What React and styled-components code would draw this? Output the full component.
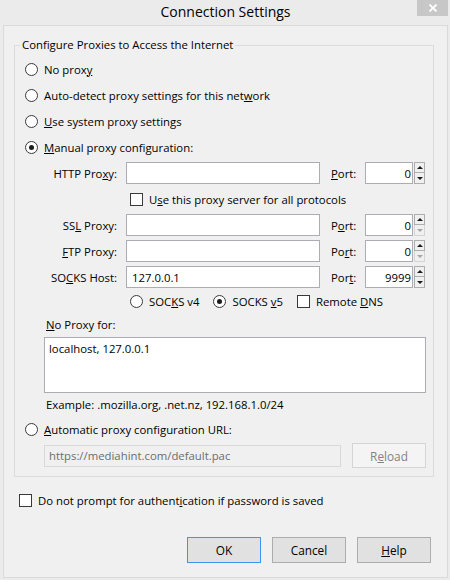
import styled, { createGlobalStyle } from "styled-components";

const GlobalStyle = createGlobalStyle`
  html, body {
    margin: 0;
    padding: 0;
    background: #ebebeb;
  }
  body {
    font-family: "Open Sans", "Noto Sans", sans-serif;
    font-size: 11.35px;
    color: #000;
  }
  * { box-sizing: border-box; }
`;

const Window = styled.div`
  width: 450px;
  height: 580px;
  background: #ebebeb;
  display: flex;
  flex-direction: column;
  padding: 0 2px 2px 3px;
`;

const TitleBar = styled.div`
  position: relative;
  height: 25px;
  display: flex;
  align-items: center;
  justify-content: center;
  font-size: 14px;
  color: #000;
  padding-bottom: 2px;
`;

const CloseButton = styled.div`
  position: absolute;
  top: 0;
  right: 0;
  width: 31px;
  height: 16px;
  background: #c7c7c7;
  display: flex;
  align-items: center;
  justify-content: center;
`;

const Client = styled.div`
  flex: 1;
  background: #f0f0f0;
  border: 1px solid #dadada;
  display: flex;
  flex-direction: column;
`;

const Group = styled.fieldset`
  margin: 11px 13px 0 10px;
  padding: 0;
  border: 1px solid #dcdcdc;
  min-width: 0;
`;

const Legend = styled.legend`
  margin-left: 5px;
  padding: 0 2px;
  line-height: 16px;
`;

const GroupBody = styled.div`
  display: flex;
  flex-direction: column;
  padding: 3px 6px 8px 10px;
`;

const U = styled.span`
  text-decoration: underline;
`;

const OptionRow = styled.label`
  display: flex;
  align-items: center;
  height: ${(p) => p.$h || 26}px;
  margin-top: ${(p) => p.$mt || 0}px;
  gap: 6px;
  white-space: nowrap;
`;

const RadioDot = styled.span`
  width: 13px;
  height: 13px;
  border-radius: 50%;
  border: 1px solid #3a3a3a;
  background: #fff;
  display: flex;
  align-items: center;
  justify-content: center;
  flex: none;

  &::after {
    content: "";
    width: 5px;
    height: 5px;
    border-radius: 50%;
    background: ${(p) => (p.$on ? "#1b1b1b" : "transparent")};
  }
`;

const CheckBox = styled.span`
  width: 13px;
  height: 13px;
  border: 1px solid #3a3a3a;
  background: #fff;
  flex: none;
`;

const ProxyGrid = styled.div`
  display: grid;
  grid-template-columns: 82px 194px 45px 60px;
  grid-template-rows: 22px 22px 22px 22px 22px 18px;
  row-gap: 4px;
  margin: 2px 0 0 19px;
  align-items: center;
`;

const FieldLabel = styled.span`
  text-align: right;
  padding-right: 9px;
  white-space: nowrap;
`;

const PortLabel = styled.span`
  padding-left: 11px;
`;

const TextBox = styled.input`
  width: 100%;
  height: 22px;
  border: 1px solid #abadb3;
  background: #fff;
  font: inherit;
  padding: 0 5px;
  outline: none;
  color: #000;
`;

const SpinWrap = styled.div`
  display: flex;
  height: 22px;
`;

const PortBox = styled(TextBox)`
  width: 48px;
  text-align: right;
  padding: 0 1px 0 2px;
`;

const SpinButtons = styled.div`
  display: flex;
  flex-direction: column;
  margin-left: 1px;
  width: 12px;
`;

const SpinButton = styled.div`
  height: 11px;
  border: 1px solid ${(p) => (p.$off ? "#d4d4d4" : "#adadad")};
  background: #f0f0f0;
  display: flex;
  align-items: center;
  justify-content: center;
  & + & { border-top: none; }

  &::after {
    content: "";
    width: 0;
    height: 0;
    border-left: 3px solid transparent;
    border-right: 3px solid transparent;
    ${(p) =>
      p.$down
        ? `border-top: 3px solid ${p.$off ? "#a6a6a6" : "#1b1b1b"};`
        : `border-bottom: 3px solid ${p.$off ? "#a6a6a6" : "#1b1b1b"};`}
  }
`;

const SpanRow = styled.div`
  grid-column: 2 / 5;
  display: flex;
  align-items: center;
  gap: 14px;
  padding-left: 4px;
`;

const InlineOption = styled.label`
  display: flex;
  align-items: center;
  gap: 6px;
  white-space: nowrap;
`;

const NoteText = styled.div`
  margin: ${(p) => p.$mt || 0}px 0 0 21px;
  line-height: 16px;
  height: 16px;
`;

const NoProxyArea = styled.textarea`
  margin: 4px 0 0 19px;
  width: 382px;
  height: 56px;
  border: 1px solid #abadb3;
  background: #fff;
  font: inherit;
  padding: 3px 4px;
  resize: none;
  outline: none;
`;

const UrlRow = styled.div`
  display: flex;
  align-items: center;
  height: 25px;
  margin: 1px 0 0 19px;
  gap: 11px;
`;

const UrlBox = styled(TextBox)`
  width: 297px;
  border-color: #d9d9d9;
  background: #f0f0f0;
  color: #6d6d6d;
  padding-left: 4px;
`;

const Button = styled.button`
  width: 74px;
  height: ${(p) => p.$h || 26}px;
  font: inherit;
  font-size: 11.8px;
  color: ${(p) => (p.$disabled ? "#838383" : "#000")};
  background: ${(p) => (p.$disabled ? "#f4f4f4" : "#e1e1e1")};
  border: 1px solid
    ${(p) => (p.$primary ? "#3c96f0" : p.$disabled ? "#d5d5d5" : "#adadad")};
  padding: 0;
  border-radius: 0;
`;

const BottomCheck = styled(OptionRow)`
  margin: 15px 0 0 15px;
  height: 16px;
`;

const ButtonBar = styled.div`
  display: flex;
  justify-content: flex-end;
  gap: 11px;
  margin: 29px 16px 0 0;
`;

const Radio = ({ on, children, ...rest }) => (
  <OptionRow {...rest}>
    <RadioDot $on={on} />
    <span>{children}</span>
  </OptionRow>
);

const Spinner = ({ value, off }) => (
  <SpinWrap>
    <PortBox defaultValue={value} />
    <SpinButtons>
      <SpinButton />
      <SpinButton $down $off={off} />
    </SpinButtons>
  </SpinWrap>
);

export default function App() {
  return (
    <>
      <GlobalStyle />
      <Window>
        <TitleBar>
          Connection Settings
          <CloseButton>
            <svg width="10" height="8" viewBox="0 0 10 8">
              <path d="M1.5 0.5 L8.5 7.5 M8.5 0.5 L1.5 7.5" stroke="#fff" strokeWidth="1.8" />
            </svg>
          </CloseButton>
        </TitleBar>
        <Client>
          <Group>
            <Legend>Configure Proxies to Access the Internet</Legend>
            <GroupBody>
              <Radio>
                No prox<U>y</U>
              </Radio>
              <Radio>
                Auto-detect proxy settings for this net<U>w</U>ork
              </Radio>
              <Radio>
                <U>U</U>se system proxy settings
              </Radio>
              <Radio on>
                <U>M</U>anual proxy configuration:
              </Radio>

              <ProxyGrid>
                <FieldLabel>
                  HTTP Pro<U>x</U>y:
                </FieldLabel>
                <TextBox />
                <PortLabel>
                  <U>P</U>ort:
                </PortLabel>
                <Spinner value="0" />

                <SpanRow>
                  <InlineOption>
                    <CheckBox />
                    <span>
                      U<U>s</U>e this proxy server for all protocols
                    </span>
                  </InlineOption>
                </SpanRow>

                <FieldLabel>
                  SS<U>L</U> Proxy:
                </FieldLabel>
                <TextBox />
                <PortLabel>
                  P<U>o</U>rt:
                </PortLabel>
                <Spinner value="0" off />

                <FieldLabel>
                  <U>F</U>TP Proxy:
                </FieldLabel>
                <TextBox />
                <PortLabel>
                  Po<U>r</U>t:
                </PortLabel>
                <Spinner value="0" off />

                <FieldLabel>
                  SO<U>C</U>KS Host:
                </FieldLabel>
                <TextBox defaultValue="127.0.0.1" />
                <PortLabel>
                  Por<U>t</U>:
                </PortLabel>
                <Spinner value="9999" />

                <SpanRow>
                  <InlineOption>
                    <RadioDot />
                    <span>
                      SOC<U>K</U>S v4
                    </span>
                  </InlineOption>
                  <InlineOption>
                    <RadioDot $on />
                    <span>
                      SOCKS <U>v</U>5
                    </span>
                  </InlineOption>
                  <InlineOption>
                    <CheckBox />
                    <span>
                      Remote <U>D</U>NS
                    </span>
                  </InlineOption>
                </SpanRow>
              </ProxyGrid>

              <NoteText $mt={7}>
                <U>N</U>o Proxy for:
              </NoteText>
              <NoProxyArea defaultValue="localhost, 127.0.0.1" />
              <NoteText $mt={4}>Example: .mozilla.org, .net.nz, 192.168.1.0/24</NoteText>

              <Radio $mt={3}>
                <U>A</U>utomatic proxy configuration URL:
              </Radio>
              <UrlRow>
                <UrlBox defaultValue="https://mediahint.com/default.pac" disabled />
                <Button $disabled $h={25}>
                  R<U>e</U>load
                </Button>
              </UrlRow>
            </GroupBody>
          </Group>

          <BottomCheck>
            <CheckBox />
            <span>
              Do not prompt for authent<U>i</U>cation if password is saved
            </span>
          </BottomCheck>

          <ButtonBar>
            <Button $primary>OK</Button>
            <Button>Cancel</Button>
            <Button>
              <U>H</U>elp
            </Button>
          </ButtonBar>
        </Client>
      </Window>
    </>
  );
}
